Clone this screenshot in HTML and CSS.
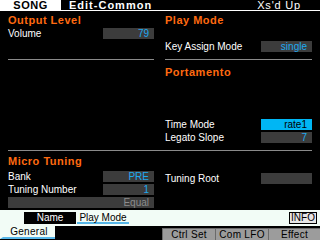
FILE: index.html
```html
<!DOCTYPE html>
<html lang="en">
<head>
<meta charset="UTF-8">
<title>SONG Edit-Common</title>
<link rel="stylesheet" href="styles.css">
</head>
<body>
<div class="screen">
  <div class="topbar">
    <div class="mode">SONG</div>
    <div class="page">Edit-Common</div>
    <div class="voice">Xs'd Up</div>
  </div>

  <div class="panes">
    <div class="cell top-left">
      <h2>Output Level</h2>
      <div class="row first"><span>Volume</span><span class="val">79</span></div>
    </div>
    <div class="cell top-right">
      <h2>Play Mode</h2>
      <div class="row key"><span>Key Assign Mode</span><span class="val">single</span></div>
    </div>

    <div class="cell mid-left"></div>
    <div class="cell mid-right">
      <h2>Portamento</h2>
      <div class="row time"><span>Time Mode</span><span class="val active">rate1</span></div>
      <div class="row"><span>Legato Slope</span><span class="val">7</span></div>
    </div>

    <div class="cell low-left">
      <h2>Micro Tuning</h2>
      <div class="row first"><span>Bank</span><span class="val">PRE</span></div>
      <div class="row"><span>Tuning Number</span><span class="val">1</span></div>
      <div class="row"><span class="val wide">Equal</span></div>
    </div>
    <div class="cell low-right">
      <div class="row"><span>Tuning Root</span><span class="val"></span></div>
    </div>
  </div>

  <div class="band">
    <div class="subtab selected">Name</div>
    <div class="subtab">Play Mode</div>
    <div class="info">INFO</div>
  </div>

  <div class="tabs">
    <div class="tab current">General</div>
    <div class="tab-gap"></div>
    <div class="tab">Ctrl Set</div>
    <div class="tab">Com LFO</div>
    <div class="tab">Effect</div>
  </div>
</div>
</body>
</html>
```

FILE: styles.css
```css
body {
  margin: 0;
  background: #000;
}

.screen {
  width: 320px;
  height: 240px;
  overflow: hidden;
  background: #000;
  color: #fff;
  font-family: "Liberation Sans", Arial, sans-serif;
  font-size: 10px;
}

/* header */
.topbar {
  display: flex;
  height: 10px;
  border-bottom: 1px solid #fff;
  line-height: 11px;
  font-size: 11px;
}

.mode {
  width: 61px;
  height: 10px;
  background: #fff;
  color: #000;
  font-weight: bold;
  text-align: center;
  letter-spacing: 0.5px;
}

.page {
  padding-left: 8px;
  font-weight: bold;
  letter-spacing: 1px;
}

.voice {
  margin-left: auto;
  margin-right: 19px;
  letter-spacing: 0.8px;
}

/* parameter panes */
.panes {
  display: grid;
  grid-template-columns: 146px 147px;
  grid-template-rows: 49px 91px 58px;
  column-gap: 11px;
  padding-left: 8px;
}

.cell {
  display: flex;
  flex-direction: column;
}

.top-left, .top-right, .mid-left, .mid-right {
  border-bottom: 1px solid #8a8a8a;
}

.top-left, .top-right {
  padding-top: 3px;
}

.mid-left {
  margin-right: -11px;
}

.mid-right {
  padding-top: 6px;
}

.low-left {
  padding-top: 4px;
}

.low-right {
  padding-top: 20px;
}

h2 {
  margin: 0;
  height: 13px;
  line-height: 13px;
  font-size: 11px;
  font-weight: bold;
  color: #ff6a10;
  letter-spacing: 0.5px;
}

.row {
  display: flex;
  justify-content: space-between;
  align-items: center;
  height: 11px;
  margin-top: 2px;
  line-height: 11px;
}

.row.first {
  margin-top: 1px;
}

.low-left .row.first {
  margin-top: 3px;
}

.row.key {
  margin-top: 14px;
}

.row.time {
  margin-top: 40px;
}

.val {
  width: 51px;
  height: 11px;
  box-sizing: border-box;
  padding-right: 5px;
  background: #3c3c3c;
  color: #1eaaf0;
  text-align: right;
}

.val.active {
  background: #00b6f4;
  color: #000;
}

.val.wide {
  width: 146px;
  color: #8c8c8c;
}

/* lower band */
.band {
  display: flex;
  align-items: flex-start;
  height: 16px;
  margin-top: 1px;
  padding-top: 2px;
  box-sizing: border-box;
  background: #f2fcf6;
}

.subtab {
  width: 52px;
  height: 12px;
  box-sizing: border-box;
  line-height: 11px;
  text-align: center;
  color: #000;
  border-bottom: 2px solid #56b6e8;
  font-size: 10px;
}

.subtab.selected {
  margin-left: 24px;
  margin-right: 1px;
  background: #000;
  color: #fff;
  border-bottom: none;
}

.info {
  margin-left: auto;
  margin-right: 3px;
  width: 28px;
  height: 12px;
  box-sizing: border-box;
  border: 1px solid #000;
  background: #e6e6e6;
  color: #000;
  line-height: 10px;
  text-align: center;
}

.tabs {
  display: flex;
  height: 14px;
}

.tab {
  height: 12px;
  margin-top: 2px;
  box-sizing: border-box;
  background: #9c9c9c;
  border-top: 1px solid #6a6a6a;
  border-left: 1px solid #6a6a6a;
  color: #000;
  text-align: center;
  line-height: 11px;
  width: 53px;
  letter-spacing: 0.3px;
}

.tab.current {
  width: 55px;
  margin-top: 0;
  height: 13px;
  border: none;
  border-left: 3px solid #f2fcf6;
  border-bottom: 2px solid #56b6e8;
  background: #f2fcf6;
  line-height: 12px;
}

.tab-gap {
  flex: 1;
}

.tab:last-child {
  width: 52px;
}
```
